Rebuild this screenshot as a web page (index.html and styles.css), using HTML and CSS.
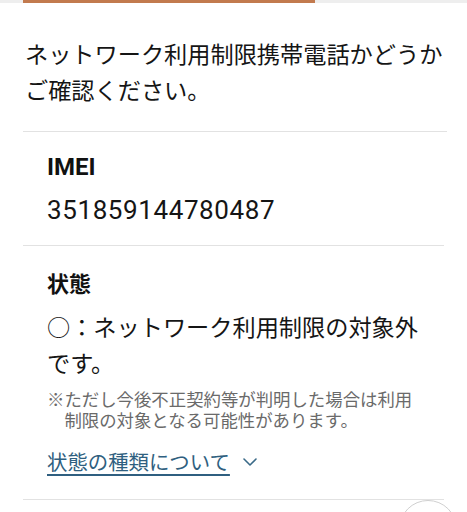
FILE: index.html
```html
<!DOCTYPE html>
<html lang="ja">
<head>
<meta charset="utf-8">
<title>ネットワーク利用制限</title>
<link rel="stylesheet" href="styles.css">
</head>
<body>
<div class="topbar"><div class="topbar-active"></div></div>
<main class="container">
  <p class="intro">ネットワーク利用制限携帯電話かどうかご確認ください。</p>
  <section class="section imei">
    <h2 class="label">IMEI</h2>
    <p class="number">351859144780487</p>
  </section>
  <section class="section status">
    <h2 class="label label-ja">状態</h2>
    <p class="status-text">○：ネットワーク利用制限の対象外です。</p>
    <p class="note">※ただし今後不正契約等が判明した場合は利用制限の対象となる可能性があります。</p>
    <a class="toggle" href="#"><span class="toggle-text">状態の種類について</span><svg class="chev" width="16" height="10" viewBox="0 0 16 10"><path d="M2 2 L8 8 L14 2" fill="none" stroke="#3a6a88" stroke-width="1.6" stroke-linecap="round" stroke-linejoin="round"/></svg></a>
  </section>
</main>
<div class="fab"></div>
</body>
</html>
```
FILE: styles.css
```css
html, body {
  margin: 0;
  padding: 0;
  background: #ffffff;
  overflow: hidden;
}
body {
  width: 467px;
  height: 512px;
  font-family: "Noto Sans CJK JP", "Noto Sans", sans-serif;
  color: #151515;
}
.topbar {
  height: 3px;
  background: #eeeeee;
  display: flex;
}
.topbar-active {
  margin-left: 23px;
  width: 292px;
  height: 3px;
  background: #c27a4e;
}
.container {
  margin: 0 20px 0 23px;
}
.intro {
  margin: 0;
  padding: 32px 0 24px 2px;
  font-size: 23.2px;
  line-height: 36px;
  border-bottom: 1.5px solid #e2e2e2;
}
.section {
  padding: 0 0 0 24px;
  margin-right: 3px;
  border-bottom: 1.5px solid #e2e2e2;
}
.imei {
  padding-top: 17px;
  padding-bottom: 15px;
}
.label {
  margin: 0;
  font-family: Roboto, "Noto Sans CJK JP", sans-serif;
  font-size: 24px;
  line-height: 36px;
  font-weight: 700;
  color: #111;
}
.number {
  margin: 5px 0 0;
  font-family: Roboto, "Noto Sans CJK JP", sans-serif;
  font-size: 26px;
  line-height: 40px;
  letter-spacing: 0.6px;
}
.status {
  padding-top: 19px;
  padding-bottom: 23px;
}
.label-ja {
  font-family: "Noto Sans CJK JP", sans-serif;
  font-size: 22px;
  line-height: 34px;
}
.status-text {
  margin: 9px 0 0;
  padding-right: 24px;
  font-size: 23.2px;
  line-height: 36px;
}
.note {
  margin: 8px 0 0;
  padding-right: 24px;
  padding-left: 17.4px;
  text-indent: -17.4px;
  font-size: 17.4px;
  line-height: 21px;
  color: #6a6a6a;
}
.toggle {
  display: flex;
  align-items: center;
  gap: 12px;
  margin-top: 16px;
  height: 30px;
  text-decoration: none;
  color: #2f5f80;
}
.toggle-text {
  font-size: 20.4px;
  line-height: 30px;
  text-decoration: underline;
  text-decoration-thickness: 1.5px;
  text-underline-offset: 4px;
}
.chev {
  display: block;
  margin-top: 1px;
}
.fab {
  position: fixed;
  left: 399px;
  top: 500px;
  width: 56px;
  height: 56px;
  border-radius: 50%;
  border: 1.5px solid #cfcfcf;
  background: #fff;
}
```
